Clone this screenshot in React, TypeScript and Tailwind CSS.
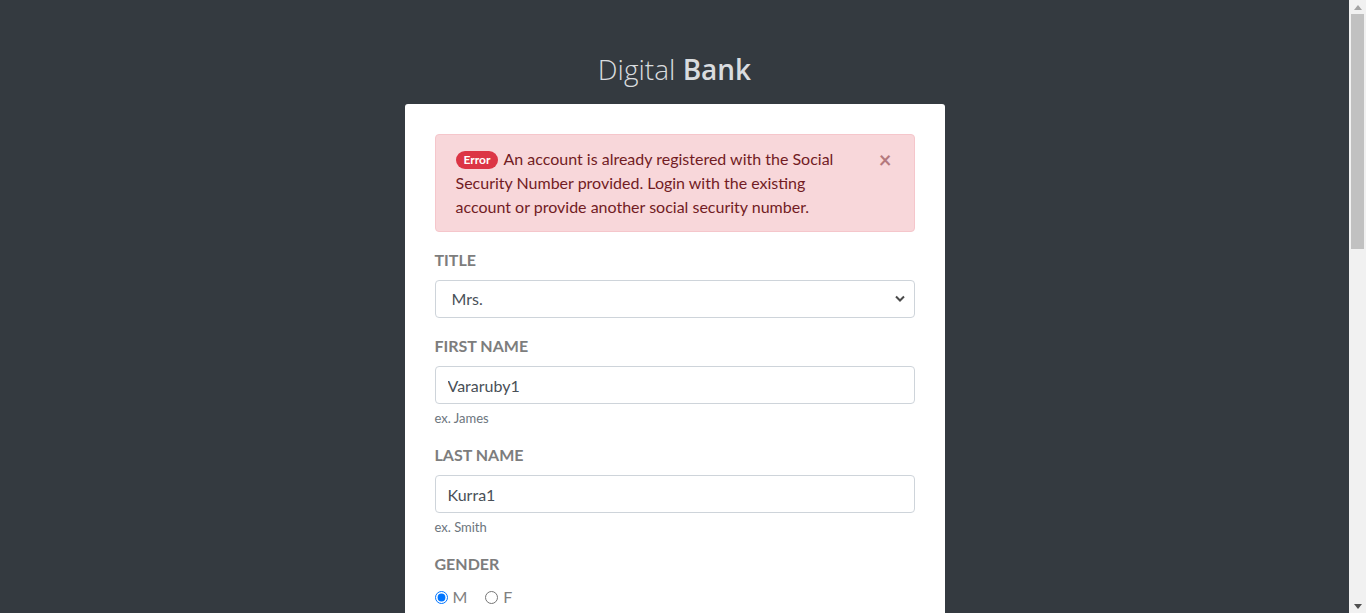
import { useState } from 'react'

const labelCls = 'block text-[16px] font-bold uppercase text-[#7d7d7d] leading-[22px] mb-[9px]'
const inputCls =
  'block w-full h-[38px] px-3 text-[16px] text-[#495057] bg-white border border-[#ced4da] rounded-[4px] outline-none'

function ScrollBar() {
  return (
    <div className="w-[17px] h-full shrink-0 bg-[#f1f1f1] flex flex-col items-center">
      <div className="h-[14px] flex items-center justify-center">
        <svg width="8" height="5" viewBox="0 0 8 5">
          <path d="M0 5 L4 0 L8 5 Z" fill="#a3a3a3" />
        </svg>
      </div>
      <div className="w-[13px] h-[235px] bg-[#c1c1c1]" />
      <div className="flex-1" />
      <div className="h-[14px] flex items-center justify-center">
        <svg width="8" height="5" viewBox="0 0 8 5">
          <path d="M0 0 L8 0 L4 5 Z" fill="#505050" />
        </svg>
      </div>
    </div>
  )
}

export default function App() {
  const [title, setTitle] = useState('Mrs.')
  const [first, setFirst] = useState('Vararuby1')
  const [last, setLast] = useState('Kurra1')
  const [gender, setGender] = useState('M')
  const [showAlert, setShowAlert] = useState(true)

  return (
    <div
      className="h-screen w-full flex bg-[#343a40] overflow-hidden"
      style={{ fontFamily: 'Lato, "Open Sans", sans-serif' }}
    >
      <div className="flex-1 overflow-hidden">
        <div className="flex flex-col items-center pt-[49px]">
          <h1
            className="text-[28px] leading-[40px] text-[#d9dcdf] mb-[15px]"
            style={{ fontFamily: '"Open Sans", sans-serif' }}
          >
            <span className="font-light">Digital</span> <span className="font-semibold">Bank</span>
          </h1>

          <div className="w-[540px] bg-white rounded-t-[3px] p-[30px] pb-10">
            {showAlert && (
              <div className="relative mb-[17px] bg-[#f8d7da] border border-[#f5c6cb] rounded-[4px] text-[#721c24] pl-5 pr-16 py-[12px] text-[16px] leading-6">
                <span className="inline-block align-[1px] bg-[#dc3545] text-white text-[12px] font-bold leading-[18px] px-2 rounded-full mr-[5px]">
                  Error
                </span>
                An account is already registered with the Social Security Number provided. Login with the existing
                account or provide another social security number.
                <button
                  onClick={() => setShowAlert(false)}
                  className="absolute right-[22px] top-[13px] text-[22px] leading-6 font-bold text-[#721c24] opacity-50"
                >
                  ×
                </button>
              </div>
            )}

            <div className="mb-[17px]">
              <label className={labelCls}>Title</label>
              <div className="relative">
                <select
                  value={title}
                  onChange={(e) => setTitle(e.target.value)}
                  className={inputCls + ' appearance-none pl-4'}
                >
                  <option>Mr.</option>
                  <option>Mrs.</option>
                  <option>Ms.</option>
                </select>
                <svg
                  className="absolute right-[10px] top-[15px] pointer-events-none"
                  width="10"
                  height="7"
                  viewBox="0 0 10 7"
                >
                  <path d="M1 1.5 L5 5.5 L9 1.5" stroke="#4a4a4a" strokeWidth="2" fill="none" />
                </svg>
              </div>
            </div>

            <div className="mb-[17px]">
              <label className={labelCls}>First Name</label>
              <input value={first} onChange={(e) => setFirst(e.target.value)} className={inputCls} />
              <small className="block mt-[5px] text-[13px] leading-[18px] text-[#6c757d]">ex. James</small>
            </div>

            <div className="mb-[17px]">
              <label className={labelCls}>Last Name</label>
              <input value={last} onChange={(e) => setLast(e.target.value)} className={inputCls} />
              <small className="block mt-[5px] text-[13px] leading-[18px] text-[#6c757d]">ex. Smith</small>
            </div>

            <div>
              <label className={labelCls + ' !mb-[10px]'}>Gender</label>
              <div className="flex items-center text-[16px] text-[#808080] leading-6">
                <label className="flex items-center mr-[18px]">
                  <input
                    type="radio"
                    name="gender"
                    checked={gender === 'M'}
                    onChange={() => setGender('M')}
                    className="w-[13px] h-[13px] m-0 mr-[5px] accent-[#0075ff]"
                  />
                  M
                </label>
                <label className="flex items-center">
                  <input
                    type="radio"
                    name="gender"
                    checked={gender === 'F'}
                    onChange={() => setGender('F')}
                    className="w-[13px] h-[13px] m-0 mr-[5px]"
                  />
                  F
                </label>
              </div>
            </div>
          </div>
        </div>
      </div>
      <ScrollBar />
    </div>
  )
}
